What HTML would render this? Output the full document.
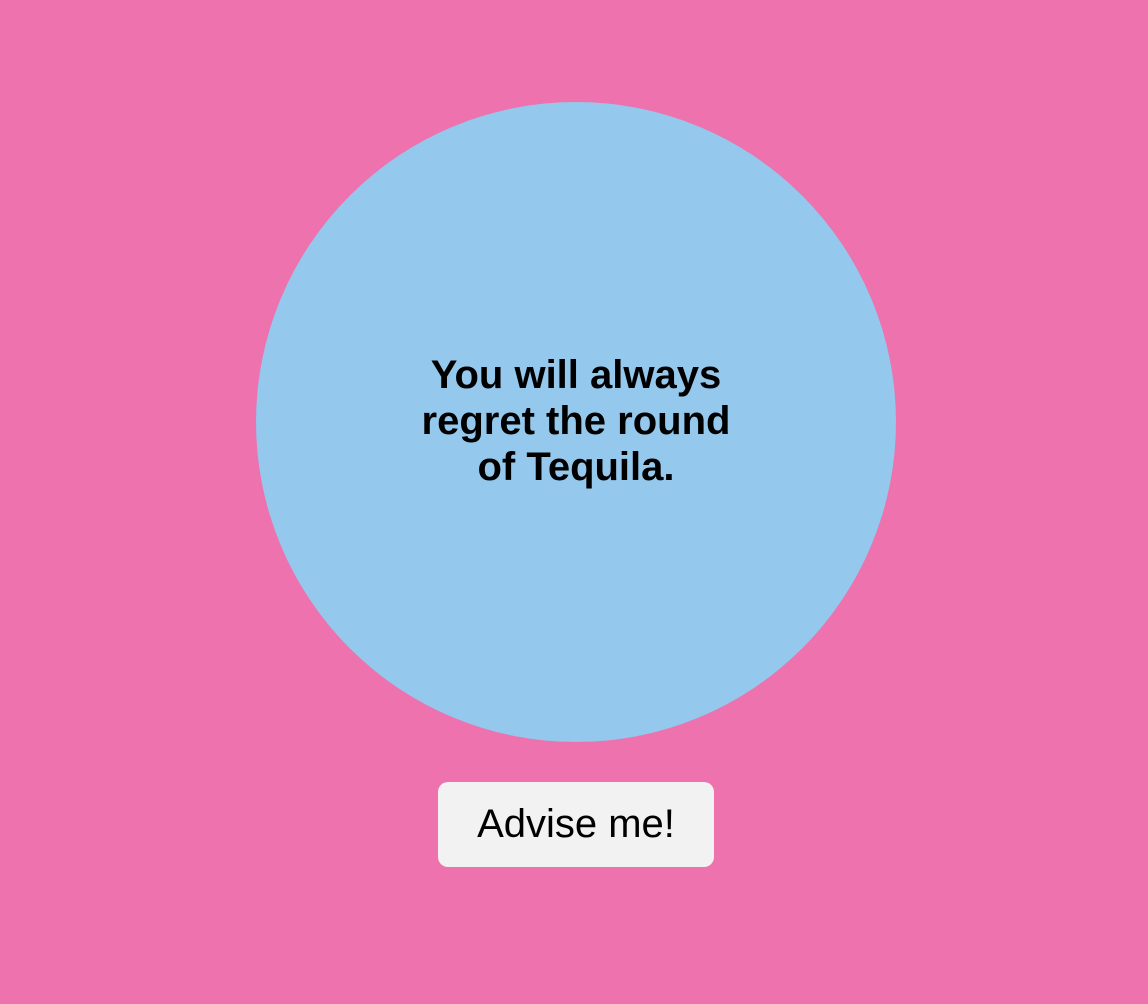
<!DOCTYPE html>
<html><head><meta charset="utf-8"><style>
html,body{margin:0;padding:0;width:1148px;height:1004px;background:#ed72ae;overflow:hidden;font-family:"Liberation Sans",Arial,sans-serif;}
.c{position:absolute;left:256px;top:102px;width:640px;height:640px;border-radius:50%;background:#94c8ed;}
.t{position:absolute;left:256px;width:640px;top:352px;text-align:center;font-weight:bold;font-size:40px;line-height:46px;color:#000;}
.b{position:absolute;left:438px;top:782px;width:276px;height:85px;border-radius:10px;background:#f2f2f2;text-align:center;line-height:85px;font-size:40px;color:#000;}
</style></head><body>
<div class="c"></div>
<div class="t">You will always<br>regret the round<br>of Tequila.</div>
<div class="b">Advise me!</div>
</body></html>
